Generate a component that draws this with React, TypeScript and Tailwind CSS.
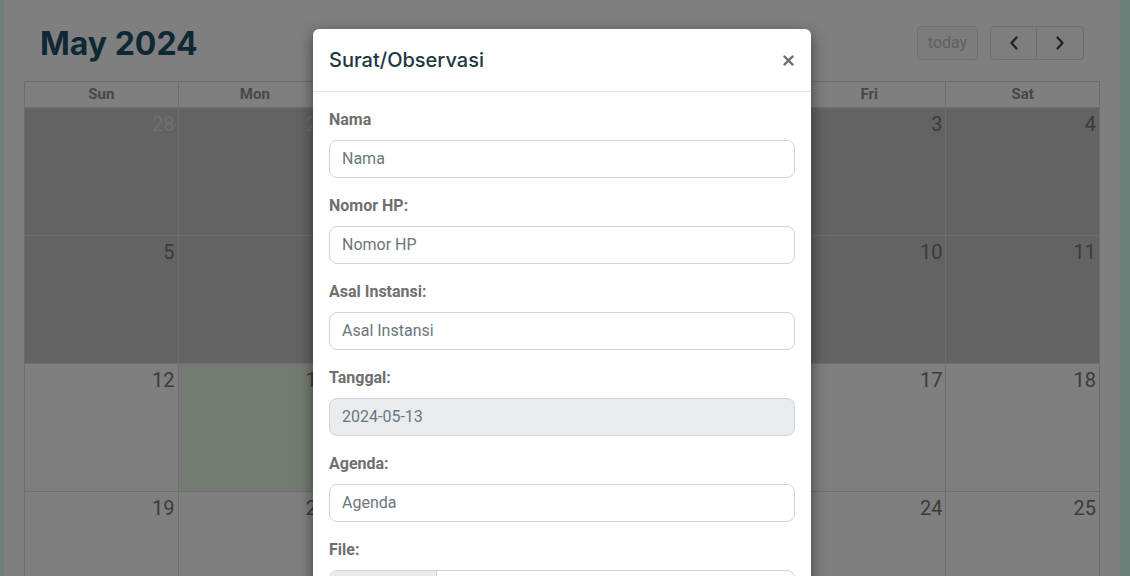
import React from "react";

type Cell = { day: number; past?: boolean; other?: boolean; today?: boolean };

const weeks: Cell[][] = [
  [
    { day: 28, past: true, other: true },
    { day: 29, past: true, other: true },
    { day: 30, past: true, other: true },
    { day: 1, past: true },
    { day: 2, past: true },
    { day: 3, past: true },
    { day: 4, past: true },
  ],
  [5, 6, 7, 8, 9, 10, 11].map((d) => ({ day: d, past: true })),
  [12, 13, 14, 15, 16, 17, 18].map((d) => ({ day: d, today: d === 13 })),
  [19, 20, 21, 22, 23, 24, 25].map((d) => ({ day: d })),
];

const dayNames = ["Sun", "Mon", "Tue", "Wed", "Thu", "Fri", "Sat"];

const Chevron = ({ dir }: { dir: "left" | "right" }) => (
  <svg width="10" height="14" viewBox="0 0 10 14" fill="none">
    <polyline
      points={dir === "left" ? "7.5,1.5 2.5,7 7.5,12.5" : "2.5,1.5 7.5,7 2.5,12.5"}
      stroke="#404040"
      strokeWidth="2.2"
      strokeLinecap="round"
      strokeLinejoin="round"
    />
  </svg>
);

const Field = ({
  label,
  placeholder,
  value,
  disabled,
}: {
  label: string;
  placeholder?: string;
  value?: string;
  disabled?: boolean;
}) => (
  <div className="mb-4">
    <div className="mb-2 text-[16px] leading-[24px] font-bold text-[#6f6f6f]">{label}</div>
    <div
      className={`h-[38px] rounded-lg border border-[#ced4da] px-3 flex items-center text-[16px] text-[#6c757d] ${
        disabled ? "bg-[#e9ecef]" : "bg-white"
      }`}
    >
      {value ?? placeholder}
    </div>
  </div>
);

export default function App() {
  return (
    <div
      className="relative h-[576px] w-[1130px] overflow-hidden bg-[#d8fef2] flex"
      style={{ fontFamily: "Roboto, 'Liberation Sans', sans-serif" }}
    >
      {/* page */}
      <div className="ml-[4px] w-[1116px] h-full bg-white px-[20px] pt-[20px]">
        <div className="h-[44px] mb-[17px] flex items-center justify-between">
          <h2
            className="pl-[16px] pt-[4px] text-[32px] font-bold text-[#1e506a] leading-none"
            style={{ fontFamily: "Inter, 'Liberation Sans', sans-serif" }}
          >
            May 2024
          </h2>
          <div className="flex items-center gap-3 pr-[16px] mt-[1px]">
            <div className="h-[34px] w-[61px] rounded border border-[#e0e0e0] bg-[#f8f8f8] flex items-center justify-center text-[16px] text-[#c0c0c0]">
              today
            </div>
            <div className="flex h-[34px] rounded border border-[#dcdcdc] bg-[#fcfcfc]">
              <div className="w-[46px] flex items-center justify-center border-r border-[#dcdcdc]">
                <Chevron dir="left" />
              </div>
              <div className="w-[46px] flex items-center justify-center">
                <Chevron dir="right" />
              </div>
            </div>
          </div>
        </div>

        <div className="border-t border-l border-[#dddddd]">
          <div className="grid grid-cols-7 h-[25px]">
            {dayNames.map((n) => (
              <div
                key={n}
                className="border-r border-[#dddddd] flex items-center justify-center text-[15px] font-bold text-[#8e8e8e]"
              >
                {n}
              </div>
            ))}
          </div>
          {weeks.map((w, i) => (
            <div key={i} className="grid grid-cols-7 h-[128px] border-t border-[#dddddd]">
              {w.map((c) => (
                <div
                  key={`${i}-${c.day}`}
                  className={`border-r border-[#dddddd] flex justify-end pt-[4px] pr-[3px] text-[20px] leading-[24px] ${
                    c.past ? "bg-[#c6c6c6]" : c.today ? "bg-[#e6f6e4]" : "bg-white"
                  } ${c.other ? "text-[#dedede]" : "text-[#777777]"}`}
                >
                  {c.day}
                </div>
              ))}
            </div>
          ))}
        </div>
      </div>

      {/* backdrop */}
      <div className="absolute inset-0 bg-black/50" />

      {/* modal */}
      <div className="absolute left-[313px] top-[29px] w-[498px] h-[620px] bg-white rounded-md shadow-[0_5px_15px_rgba(0,0,0,0.5)]">
        <div className="h-[63px] px-4 border-b border-[#dee2e6] flex items-center justify-between">
          <div
            className="text-[20px] font-medium text-[#1d3741]"
            style={{ fontFamily: "Inter, 'Liberation Sans', sans-serif" }}
          >
            Surat/Observasi
          </div>
          <svg width="11" height="11" viewBox="0 0 11 11" className="mr-[1px]">
            <path d="M1.5 1.5 L9.5 9.5 M9.5 1.5 L1.5 9.5" stroke="#6b6b6b" strokeWidth="2.4" strokeLinecap="round" />
          </svg>
        </div>
        <div className="p-4">
          <Field label="Nama" placeholder="Nama" />
          <Field label="Nomor HP:" placeholder="Nomor HP" />
          <Field label="Asal Instansi:" placeholder="Asal Instansi" />
          <Field label="Tanggal:" value="2024-05-13" disabled />
          <Field label="Agenda:" placeholder="Agenda" />
          <div className="mb-4">
            <div className="mb-2 text-[16px] leading-[24px] font-bold text-[#6f6f6f]">File:</div>
            <div className="h-[38px] rounded-lg border border-[#ced4da] flex overflow-hidden text-[16px] text-[#212529] whitespace-nowrap">
              <div className="w-[107px] bg-[#e9ecef] border-r border-[#ced4da] flex items-center px-2">
                Choose File
              </div>
              <div className="flex items-center px-3">No file chosen</div>
            </div>
          </div>
        </div>
      </div>
    </div>
  );
}
